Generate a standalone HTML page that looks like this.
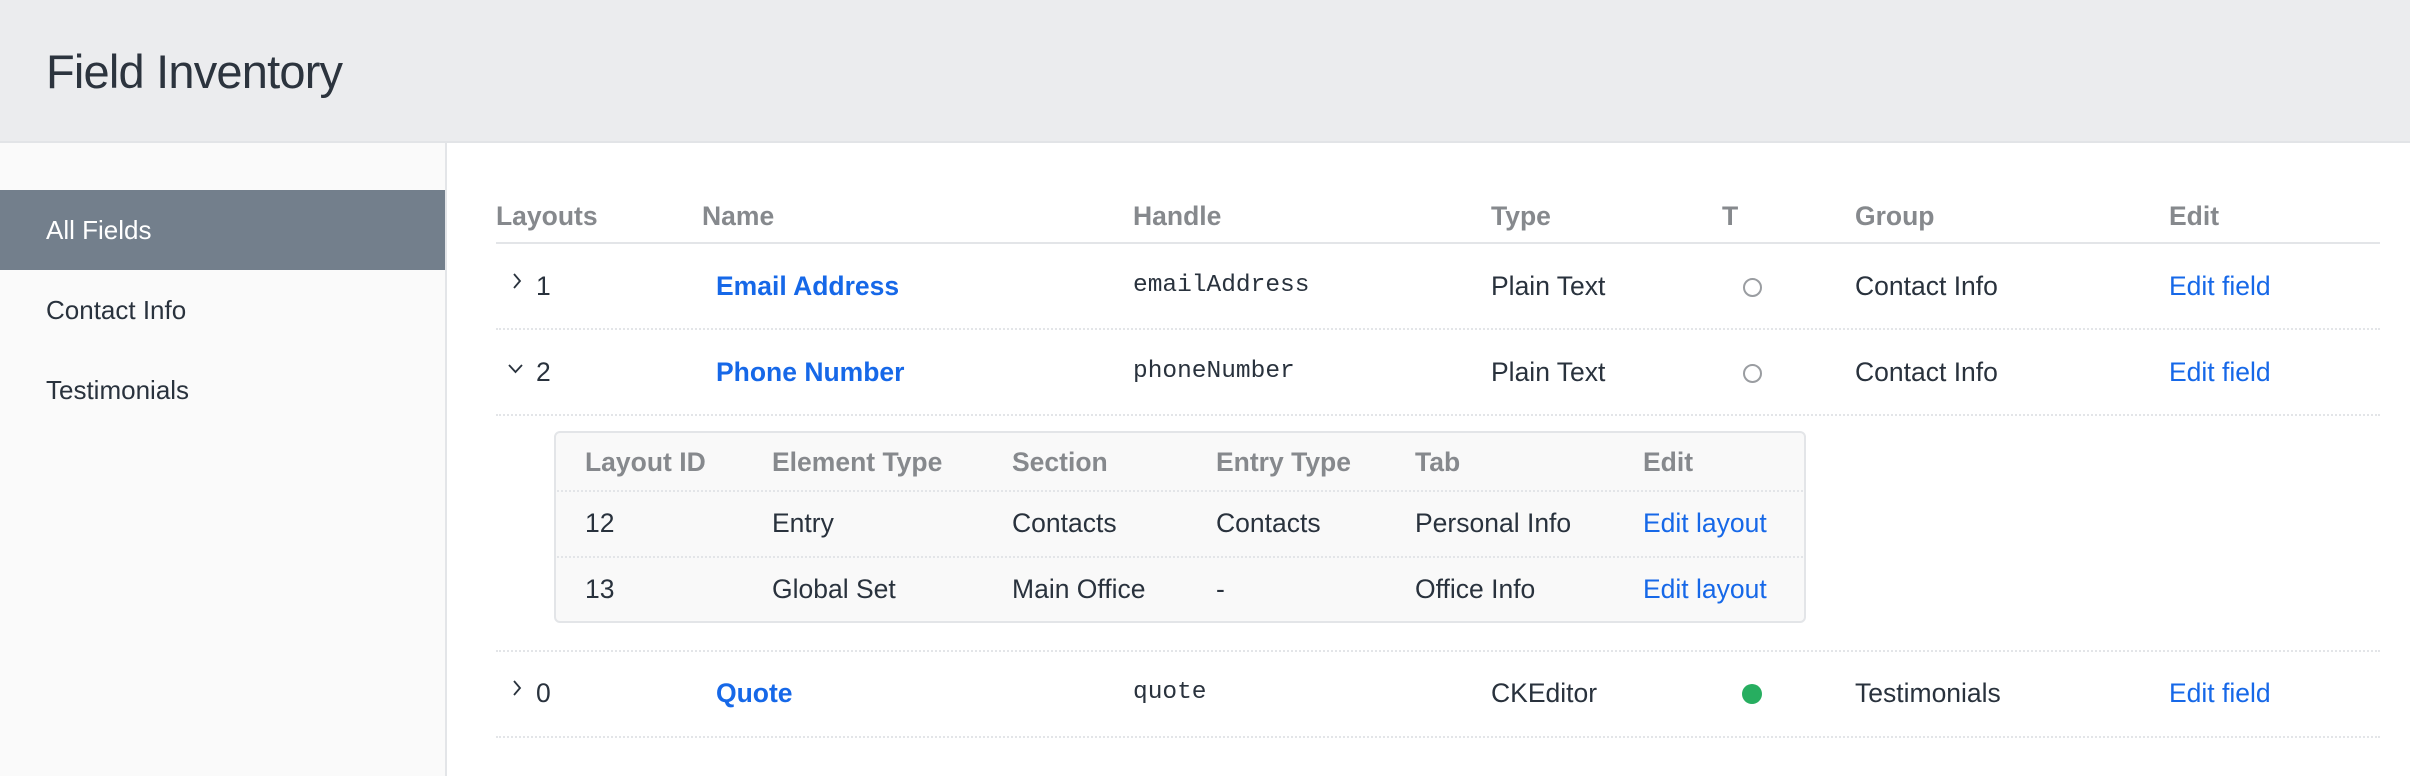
<!DOCTYPE html>
<html><head><meta charset="utf-8"><style>
*{margin:0;padding:0;box-sizing:border-box}
body{width:2410px;height:776px;overflow:hidden;background:#fff;font-family:"Liberation Sans",Arial,sans-serif;color:#29323d;position:relative}
.hdr{position:absolute;left:0;top:0;width:2410px;height:143px;background:#ebecee;border-bottom:2px solid #e2e4e7}
.hdr h1{position:absolute;left:46px;top:44px;font-size:47px;font-weight:400;color:#2c343e;letter-spacing:-0.8px}
.side{position:absolute;left:0;top:143px;width:447px;height:633px;background:#fafafa;border-right:2px solid #e3e5e8}
.it{position:absolute;left:0;width:445px;height:80px;line-height:80px;padding-left:46px;font-size:26px;color:#29323d}
.it.on{background:#737f8c;color:#fff}
.a{position:absolute;white-space:nowrap;font-size:26.5px;line-height:30px}
.th{font-weight:bold;color:#86898d}
.lnk{color:#1668e8}
.b{font-weight:bold}
.mono{font-family:"Liberation Mono",monospace;font-size:24.5px}
.dl{position:absolute;left:496px;width:1884px;height:0;border-top:2px dotted #e3e5e8}
.sub{position:absolute;left:554px;top:431px;width:1252px;height:192px;background:#f9f9f9;border:2px solid #e3e5e8;border-radius:6px}
.sdl{position:absolute;left:554px;width:1252px;border-top:2px dotted #e3e5e8}
svg{position:absolute}
</style></head><body>
<div class="hdr"><h1>Field Inventory</h1></div>
<div class="side">
<div class="it on" style="top:47px">All Fields</div>
<div class="it" style="top:127px">Contact Info</div>
<div class="it" style="top:207px">Testimonials</div>
</div>

<div class="a th" style="left:496px;top:201px">Layouts</div>
<div class="a th" style="left:702px;top:201px">Name</div>
<div class="a th" style="left:1133px;top:201px">Handle</div>
<div class="a th" style="left:1491px;top:201px">Type</div>
<div class="a th" style="left:1722px;top:201px">T</div>
<div class="a th" style="left:1855px;top:201px">Group</div>
<div class="a th" style="left:2169px;top:201px">Edit</div>
<div style="position:absolute;left:496px;top:242px;width:1884px;height:2px;background:#e3e5e8"></div>

<svg style="left:510px;top:272px" width="14" height="20"><path d="M4 2 L10 9 L4 16" fill="none" stroke="#29323d" stroke-width="1.8"/></svg>
<div class="a" style="left:536px;top:271px">1</div>
<div class="a lnk b" style="left:716px;top:271px">Email Address</div>
<div class="a mono" style="left:1133px;top:271px">emailAddress</div>
<div class="a" style="left:1491px;top:271px">Plain Text</div>
<div style="position:absolute;left:1743px;top:278px;width:19px;height:19px;border:2px solid #9a9da1;border-radius:50%"></div>
<div class="a" style="left:1855px;top:271px">Contact Info</div>
<div class="a lnk" style="left:2169px;top:271px">Edit field</div>
<div class="dl" style="top:328px"></div>

<svg style="left:506px;top:362px" width="20" height="14"><path d="M3 3 L9.5 10 L16 3" fill="none" stroke="#29323d" stroke-width="1.8"/></svg>
<div class="a" style="left:536px;top:357px">2</div>
<div class="a lnk b" style="left:716px;top:357px">Phone Number</div>
<div class="a mono" style="left:1133px;top:357px">phoneNumber</div>
<div class="a" style="left:1491px;top:357px">Plain Text</div>
<div style="position:absolute;left:1743px;top:364px;width:19px;height:19px;border:2px solid #9a9da1;border-radius:50%"></div>
<div class="a" style="left:1855px;top:357px">Contact Info</div>
<div class="a lnk" style="left:2169px;top:357px">Edit field</div>
<div class="dl" style="top:414px"></div>

<div class="sub"></div>
<div class="a th" style="left:585px;top:447px">Layout ID</div>
<div class="a th" style="left:772px;top:447px">Element Type</div>
<div class="a th" style="left:1012px;top:447px">Section</div>
<div class="a th" style="left:1216px;top:447px">Entry Type</div>
<div class="a th" style="left:1415px;top:447px">Tab</div>
<div class="a th" style="left:1643px;top:447px">Edit</div>
<div class="sdl" style="top:490px"></div>
<div class="a" style="left:585px;top:508px">12</div>
<div class="a" style="left:772px;top:508px">Entry</div>
<div class="a" style="left:1012px;top:508px">Contacts</div>
<div class="a" style="left:1216px;top:508px">Contacts</div>
<div class="a" style="left:1415px;top:508px">Personal Info</div>
<div class="a lnk" style="left:1643px;top:508px">Edit layout</div>
<div class="sdl" style="top:556px"></div>
<div class="a" style="left:585px;top:574px">13</div>
<div class="a" style="left:772px;top:574px">Global Set</div>
<div class="a" style="left:1012px;top:574px">Main Office</div>
<div class="a" style="left:1216px;top:574px">-</div>
<div class="a" style="left:1415px;top:574px">Office Info</div>
<div class="a lnk" style="left:1643px;top:574px">Edit layout</div>
<div class="dl" style="top:650px"></div>

<svg style="left:510px;top:679px" width="14" height="20"><path d="M4 2 L10 9 L4 16" fill="none" stroke="#29323d" stroke-width="1.8"/></svg>
<div class="a" style="left:536px;top:678px">0</div>
<div class="a lnk b" style="left:716px;top:678px">Quote</div>
<div class="a mono" style="left:1133px;top:678px">quote</div>
<div class="a" style="left:1491px;top:678px">CKEditor</div>
<div style="position:absolute;left:1742px;top:684px;width:20px;height:20px;background:#27ae60;border-radius:50%"></div>
<div class="a" style="left:1855px;top:678px">Testimonials</div>
<div class="a lnk" style="left:2169px;top:678px">Edit field</div>
<div class="dl" style="top:736px"></div>
</body></html>
